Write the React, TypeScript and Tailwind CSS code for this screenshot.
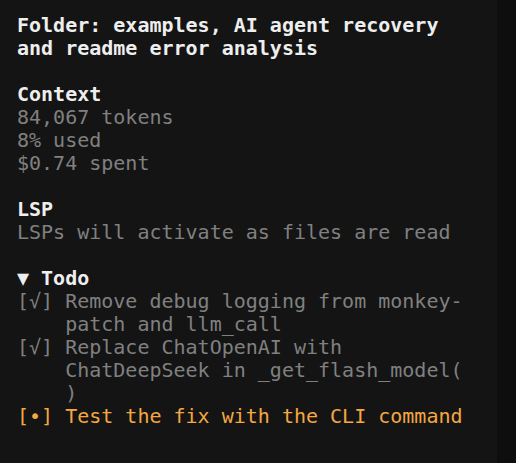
import React from "react";

const mono = { fontFamily: '"DejaVu Sans Mono", "Liberation Mono", monospace' };

function Line({ children, className = "" }: { children?: React.ReactNode; className?: string }) {
  return <div className={`h-[23px] whitespace-pre ${className}`}>{children}</div>;
}

export default function App() {
  return (
    <div className="flex h-[463px] w-[516px] overflow-hidden" style={mono}>
      <div className="w-[497px] bg-[#141414] pl-[17px] pt-[14px] text-[20px] leading-[23px] text-[#808080]">
        <Line className="font-bold text-[#eeeeee]">Folder: examples, AI agent recovery</Line>
        <Line className="font-bold text-[#eeeeee]">and readme error analysis</Line>
        <Line />
        <Line className="font-bold text-[#eeeeee]">Context</Line>
        <Line>84,067 tokens</Line>
        <Line>8% used</Line>
        <Line>$0.74 spent</Line>
        <Line />
        <Line className="font-bold text-[#eeeeee]">LSP</Line>
        <Line>LSPs will activate as files are read</Line>
        <Line />
        <Line className="font-bold text-[#eeeeee]">▼ Todo</Line>
        <Line>[√] Remove debug logging from monkey-</Line>
        <Line>    patch and llm_call</Line>
        <Line>[√] Replace ChatOpenAI with</Line>
        <Line>    ChatDeepSeek in _get_flash_model(</Line>
        <Line>    )</Line>
        <Line className="text-[#f5a742]">[•] Test the fix with the CLI command</Line>
      </div>
      <div className="flex-1 bg-[#0e0e0e]" />
    </div>
  );
}
